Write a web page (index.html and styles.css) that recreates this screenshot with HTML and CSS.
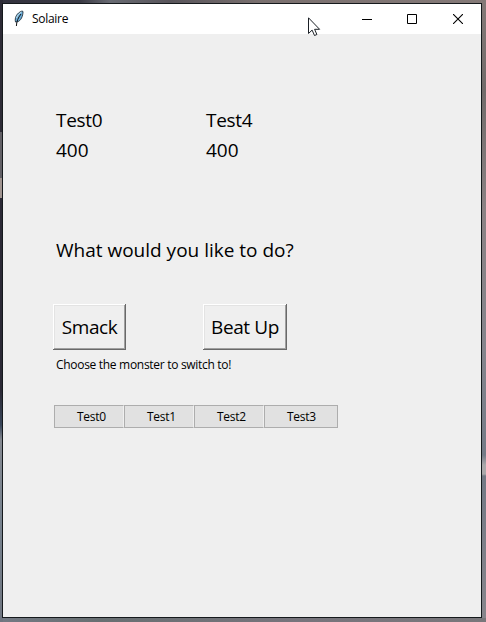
FILE: index.html
```html
<!DOCTYPE html>
<html lang="en">
<head>
<meta charset="utf-8">
<title>Solaire</title>
<link rel="stylesheet" href="styles.css">
</head>
<body>
<main class="window">
  <header class="titlebar">
    <svg class="feather" width="12" height="17" viewBox="0 0 12 17">
      <path d="M2.5 12C1.5 8 3.5 3 9 1l1 .5C10 6 8 11 4 12z" fill="#6baedb" stroke="#22303a" stroke-width=".9"/>
      <path d="M3.5 8C4.5 5 6.5 3 8.5 2" fill="none" stroke="#c3dde6"/>
      <path d="M8 4C5 8 3.6 11 3.4 16" fill="none" stroke="#111" stroke-width="1"/>
    </svg>
    <span class="title">Solaire</span>
    <div class="controls">
      <svg class="minimize" width="10" height="10" viewBox="0 0 10 10"><path d="M0 5.5h10" stroke="#000"/></svg>
      <svg width="10" height="10" viewBox="0 0 10 10"><path d="M.5.5h9v9h-9z" fill="none" stroke="#000"/></svg>
      <svg width="10" height="10" viewBox="0 0 10 10"><path d="M0 0l10 10M10 0L0 10" stroke="#000" stroke-width="1.1"/></svg>
    </div>
  </header>
  <section class="content">
    <div class="stats">
      <div><p class="name">Test0</p><p class="hp">400</p></div>
      <div><p class="name">Test4</p><p class="hp">400</p></div>
    </div>
    <p class="question">What would you like to do?</p>
    <div class="moves">
      <button class="move smack">Smack</button>
      <button class="move beat">Beat Up</button>
    </div>
    <p class="hint">Choose the monster to switch to!</p>
    <div class="team">
      <button>Test0</button><button>Test1</button><button>Test2</button><button>Test3</button>
    </div>
  </section>
</main>
<svg class="cursor" width="13" height="20" viewBox="0 0 13 20">
  <path d="M.5.8v15.7l3.6-3.4 2.4 5.4 2.4-1-2.3-5.2h5z" fill="#fff" stroke="#1b2026"/>
</svg>
</body>
</html>
```
FILE: styles.css
```css
* { box-sizing: border-box; }
body {
  margin: 0;
  width: 486px;
  height: 622px;
  padding: 3px 4px 4px 2px;
  overflow: hidden;
  font-family: "Open Sans", "Noto Sans", sans-serif;
  color: #000;
  background:
    linear-gradient(#2d2b36 0 132px, #626066 132px 178px, #a09490 178px 198px, #2b2935 198px 390px, #39465a 425px, #858991 440px, #77828e 520px, #6f7580) 0 0 / 3px 622px no-repeat,
    linear-gradient(90deg, #33323e, #3a3944 80px, #696b73 110px, #59555b 170px, #7a706f 260px, #857a78) 0 0 / 486px 3px no-repeat,
    linear-gradient(90deg, #737983, #686f72 100px, #77747c 300px, #79777b) 0 618px / 486px 4px no-repeat,
    linear-gradient(#857a78, #716b6a 90px, #8b8284 210px, #85858d 350px, #747b87 455px, #aaa8aa 465px 474px, #737985 476px, #88868c);
}
p { margin: 0; white-space: nowrap; }
.window {
  width: 480px;
  height: 615px;
  border: 1px solid #15191c;
  background: #efefef;
}
.titlebar {
  display: flex;
  align-items: center;
  height: 30px;
  padding: 0 14px 0 10px;
  background: #fff;
}
.feather { margin-top: -1px; }
.title { margin: -2px 0 0 7px; font-size: 12px; letter-spacing: -.3px; }
.controls { display: flex; gap: 36px; margin: -1px 4px 0 auto; }
.minimize { margin-right: -1px; }
.content { padding: 71px 0 0 50px; }
.stats { display: grid; grid-template-columns: 150px 150px; padding-left: 3px; }
.stats p, .question { font-size: 19px; line-height: 30px; }
.stats .name { letter-spacing: -.3px; }
.question { margin: 70px 0 39px 3px; }
.moves { display: grid; grid-template-columns: 150px 150px; justify-items: start; }
.move {
  height: 46px;
  padding: 0;
  border: 0;
  background: #efefef;
  box-shadow: inset -1px -1px #696969, inset 1px 1px #fff, inset -2px -2px #a0a0a0, inset 2px 2px #e3e3e3;
  font: 19px/46px "Open Sans", sans-serif;
  letter-spacing: -.4px;
  color: #000;
}
.smack { width: 73px; }
.beat { width: 84px; }
.hint { margin: 5px 0 0 3px; font-size: 12px; line-height: 20px; letter-spacing: -.3px; }
.team { display: flex; margin: 30px 0 0 1px; }
.team button {
  width: 70px;
  height: 23px;
  padding: 0 0 0 22px;
  border: 1px solid #adadad;
  border-right-color: #f0f0f0;
  background: #e1e1e1;
  font: 12px/21px "Open Sans", sans-serif;
  letter-spacing: -.3px;
  text-align: left;
  color: #000;
}
.team button:last-child { width: 74px; border-right-color: #adadad; }
.cursor { position: absolute; left: 308px; top: 17px; }
```
